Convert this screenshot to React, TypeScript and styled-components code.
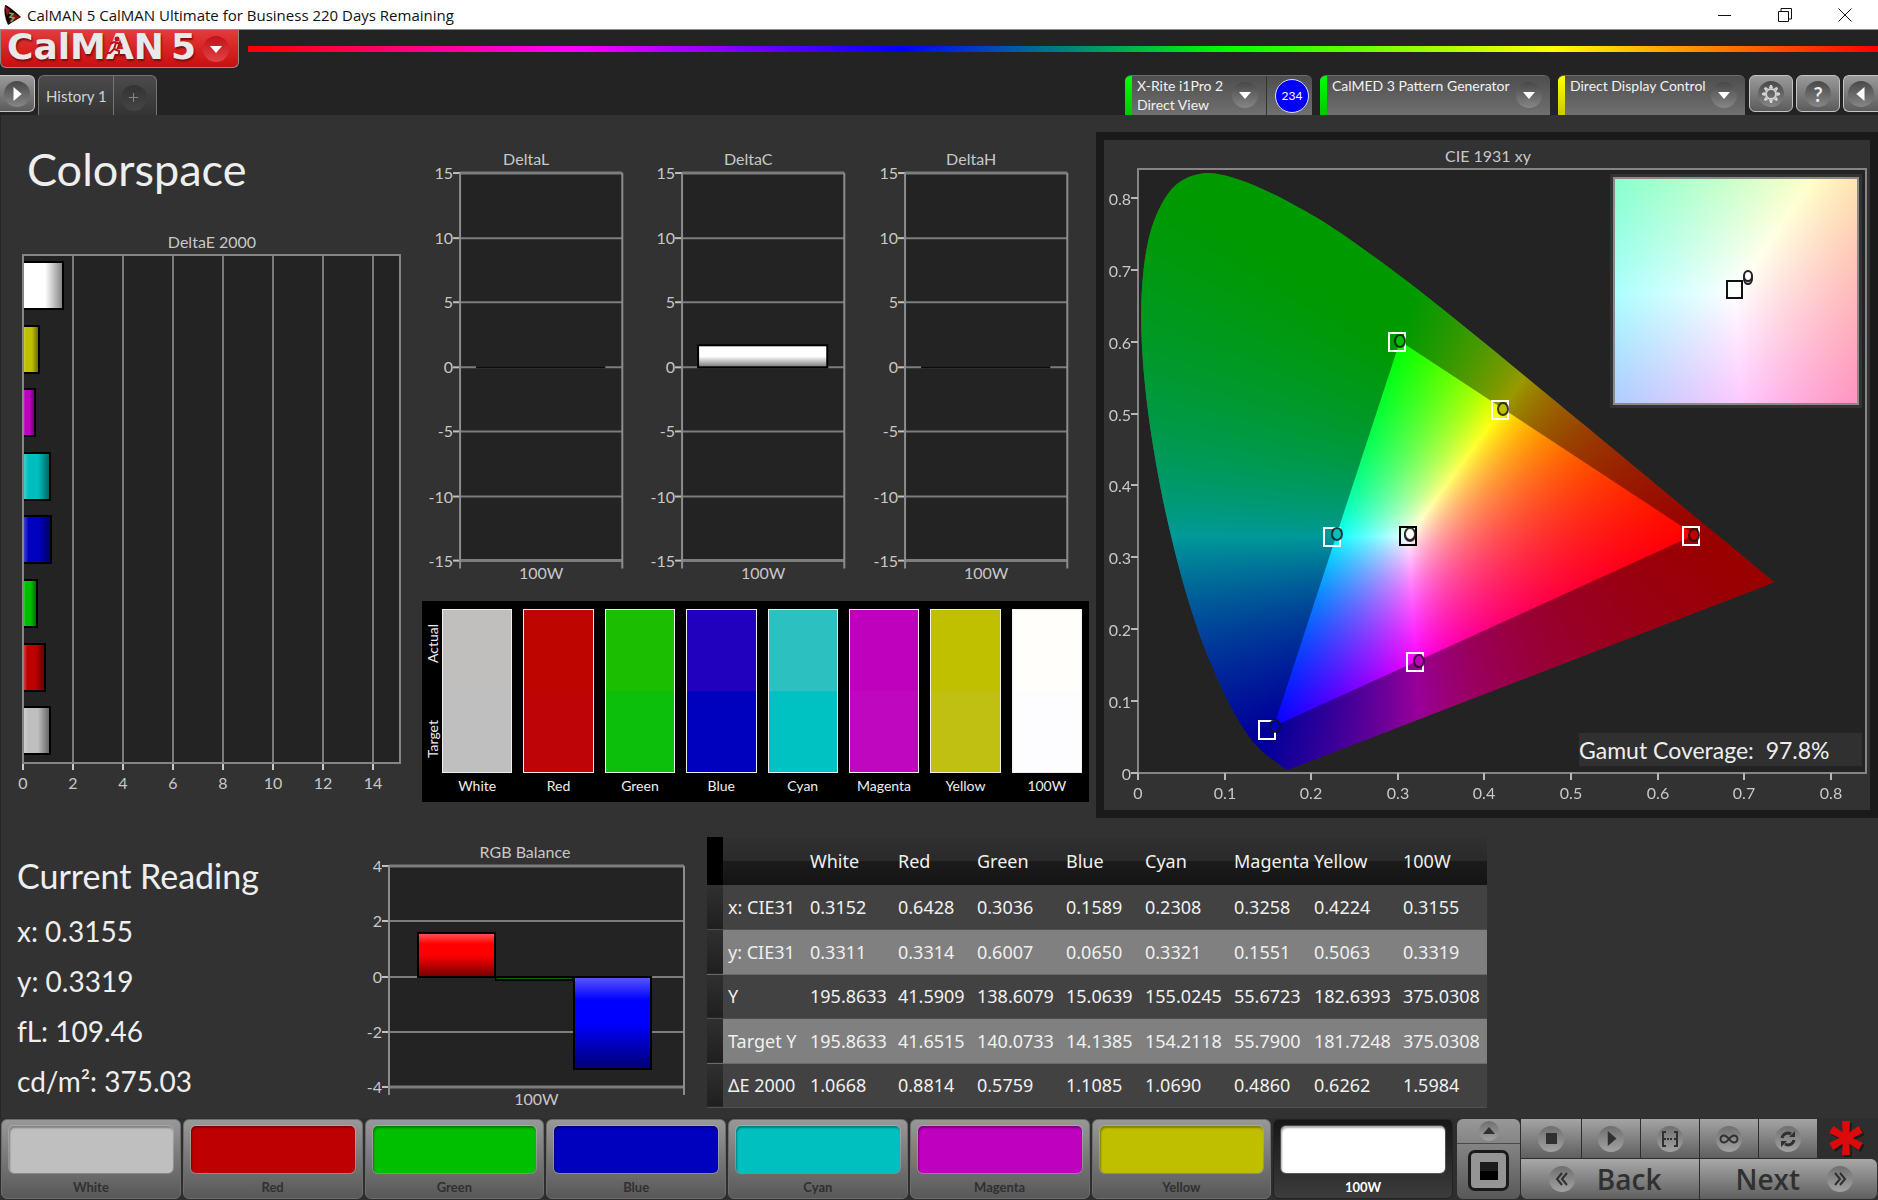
import React, { useEffect, useRef } from "react";
import styled, { createGlobalStyle, css } from "styled-components";

/* ---------- data ---------- */

const READINGS = [
  { name: "White", color: "#bfbfbf", actual: "#c0bfbd", target: "#bfbfbf", x: "0.3152", y: "0.3311", Y: "195.8633", targetY: "195.8633", dE: "1.0668" },
  { name: "Red", color: "#bf0000", actual: "#be0500", target: "#bf0408", x: "0.6428", y: "0.3314", Y: "41.5909", targetY: "41.6515", dE: "0.8814" },
  { name: "Green", color: "#00bf00", actual: "#1bbe00", target: "#0bbf0b", x: "0.3036", y: "0.6007", Y: "138.6079", targetY: "140.0733", dE: "0.5759" },
  { name: "Blue", color: "#0000bf", actual: "#2100be", target: "#0000bf", x: "0.1589", y: "0.0650", Y: "15.0639", targetY: "14.1385", dE: "1.1085" },
  { name: "Cyan", color: "#00bfbf", actual: "#2cc1c0", target: "#00c2c2", x: "0.2308", y: "0.3321", Y: "155.0245", targetY: "154.2118", dE: "1.0690" },
  { name: "Magenta", color: "#bf00bf", actual: "#bf00bc", target: "#bf07bf", x: "0.3258", y: "0.1551", Y: "55.6723", targetY: "55.7900", dE: "0.4860" },
  { name: "Yellow", color: "#bfbf00", actual: "#c0bf00", target: "#c0c012", x: "0.4224", y: "0.5063", Y: "182.6393", targetY: "181.7248", dE: "0.6262" },
  { name: "100W", color: "#ffffff", actual: "#fffefa", target: "#fdfdff", x: "0.3155", y: "0.3319", Y: "375.0308", targetY: "375.0308", dE: "1.5984" },
];

type RowKey = "x" | "y" | "Y" | "targetY" | "dE";
const TABLE_ROWS: { label: string; key: RowKey }[] = [
  { label: "x: CIE31", key: "x" },
  { label: "y: CIE31", key: "y" },
  { label: "Y", key: "Y" },
  { label: "Target Y", key: "targetY" },
  { label: "ΔE 2000", key: "dE" },
];

const LOCUS: [number, number][] = [
  [0.1741, 0.005], [0.1714, 0.0051], [0.1689, 0.0069], [0.1644, 0.0109], [0.1566, 0.0177],
  [0.144, 0.0297], [0.1355, 0.0399], [0.1241, 0.0578], [0.1096, 0.0868], [0.0913, 0.1327],
  [0.0687, 0.2007], [0.0454, 0.295], [0.0235, 0.4127], [0.0082, 0.5384], [0.0039, 0.6548],
  [0.0139, 0.7502], [0.0389, 0.812], [0.0743, 0.8338], [0.1142, 0.8262], [0.1547, 0.8059],
  [0.1929, 0.7816], [0.2296, 0.7543], [0.3016, 0.6923], [0.3731, 0.6245], [0.4441, 0.5547],
  [0.5125, 0.4866], [0.5752, 0.4242], [0.627, 0.3725], [0.6658, 0.334], [0.6915, 0.3083],
  [0.719, 0.2809], [0.7347, 0.2653],
];

/* ---------- base ---------- */

const sans = `Lato, "Liberation Sans", sans-serif`;
const uiSans = `"Open Sans", "Noto Sans", sans-serif`;

const GlobalStyle = createGlobalStyle`
  *, *::before, *::after { box-sizing: border-box; }
  body { margin: 0; background: #232323; }
  button { font: inherit; color: inherit; border: 0; margin: 0; padding: 0; background: none; cursor: pointer; }
  h1, h2, p { margin: 0; font-weight: 400; }
`;

const Window = styled.div`
  min-height: 100vh;
  display: flex;
  flex-direction: column;
  background: #232323;
  color: #eee;
  font-family: ${sans};
  overflow: hidden;
`;

/* ---------- title bar ---------- */

const TitleBar = styled.header`
  height: 30px;
  flex: none;
  display: flex;
  align-items: center;
  padding: 0 3px;
  background: #fff;
  border-bottom: 1px solid #8b9392;
  color: #111;
  font-family: ${uiSans};
  font-size: 15px;
`;
const TitleText = styled.span`
  flex: 1;
  padding-left: 5px;
  white-space: nowrap;
`;
const CaptionButton = styled.button`
  width: 60px;
  height: 29px;
  display: grid;
  place-items: center;
`;

/* ---------- brand row ---------- */

const BrandRow = styled.div`
  display: flex;
  height: 38px;
  flex: none;
`;
const Brand = styled.button`
  width: 239px;
  height: 38px;
  display: flex;
  align-items: center;
  padding: 0 9px 4px 6px;
  border: solid #8a8a8a;
  border-width: 0 1px 1px 1px;
  border-radius: 0 0 6px 6px;
  background: linear-gradient(#e23c3c, #d92323 50%, #c80f0f);
  position: relative;
`;
const BrandText = styled.span`
  flex: 1;
  display: flex;
  gap: 7px;
  font: bold 36px/36px "DejaVu Sans", sans-serif;
  color: #e9e9e9;
  text-align: left;
  text-shadow: 1px 2px 2px #7a0c0c;
`;
const Runner = styled.svg`
  position: absolute;
  left: 105px;
  top: 6px;
`;
const BrandArrow = styled.span`
  width: 26px;
  height: 26px;
  margin-top: 4px;
  border-radius: 50%;
  display: grid;
  place-items: center;
  background: linear-gradient(#c4101c, #e04444);
`;
const Rainbow = styled.div`
  flex: 1;
  height: 6px;
  margin: 16px 0 0 9px;
  background: linear-gradient(90deg, #f00, #f0f, #00f, #0f0, #ff0, #f00);
`;

/* ---------- tab row ---------- */

const TabRow = styled.nav`
  display: flex;
  align-items: flex-start;
  flex: none;
  height: 47px;
  padding-top: 7px;
  overflow: hidden;
`;
const ToolButton = styled.button<{ $edge?: "left" | "right" }>`
  width: 44px;
  height: 37px;
  margin-right: 3px;
  display: grid;
  place-items: center;
  border: 1px solid #c4c4c4;
  border-radius: 6px;
  background: linear-gradient(#9a9a9a, #5c5c5c);
  ${(p) => p.$edge === "left" && css`width: 35px; border-left: 0; border-radius: 0 6px 6px 0;`}
  ${(p) => p.$edge === "right" && css`width: 35px; margin-right: 0; border-right: 0; border-radius: 6px 0 0 6px;`}
`;
const Knob = styled.span<{ $size?: number; $tone?: "dark" | "tab" | "light" }>`
  width: ${(p) => p.$size ?? 26}px;
  height: ${(p) => p.$size ?? 26}px;
  flex: none;
  border-radius: 50%;
  display: grid;
  place-items: center;
  background: ${(p) =>
    p.$tone === "light" ? "linear-gradient(#6f6f6f, #a2a2a2)"
    : p.$tone === "tab" ? "linear-gradient(#333, #454545)"
    : "linear-gradient(#484848, #868686)"};
`;
const HelpMark = styled.b`
  font-size: 20px;
  line-height: 24px;
`;
const HistoryTabs = styled.div`
  display: flex;
  height: 40px;
  border: 1px solid #747474;
  border-bottom: 0;
  border-radius: 6px 6px 0 0;
  background: linear-gradient(#4b4b4b, #343434);
`;
const HistoryTab = styled.button`
  padding: 0 6px 0 7px;
  color: #d2d2d2;
  font-size: 15px;
  border-right: 1px solid #747474;
`;
const AddTab = styled.button`
  width: 42px;
  padding: 4px 0 0 7px;
`;
const TabSpacer = styled.div`
  flex: 1;
`;
const DeviceTab = styled.div<{ $led: string; $width: number }>`
  width: ${(p) => p.$width}px;
  height: 40px;
  margin-right: 8px;
  display: flex;
  border-radius: 6px 6px 0 0;
  overflow: hidden;
  background: linear-gradient(#4e4e4e, #707070);
  border-top: 1px solid #6c6c6c;
  &:has(+ ${ToolButton}) { margin-right: 4px; }
  &::before {
    content: "";
    flex: none;
    width: 7px;
    background: ${(p) => p.$led};
  }
`;
const DeviceButton = styled.button`
  flex: 1;
  display: flex;
  justify-content: space-between;
  align-items: flex-start;
  padding: 0 8px 0 5px;
  font-size: 14px;
  line-height: 19px;
  text-align: left;
  color: #f2f2f2;
  white-space: nowrap;
  & ${Knob} {
    margin-top: 6px;
  }
`;
const BadgeCell = styled.div`
  width: 46px;
  display: grid;
  place-items: center;
  border-left: 1px solid #333;
  padding-left: 5px;
`;
const Badge = styled.span`
  width: 34px;
  height: 34px;
  border-radius: 50%;
  border: 1px solid #ddf;
  background: #00f;
  color: #fff;
  display: grid;
  place-items: center;
  font-size: 12px;
`;

/* ---------- workspace ---------- */

const Workspace = styled.main`
  flex: 1;
  background: #323232;
  border-left: 1px solid #262626;
`;
const Upper = styled.div`
  display: grid;
  grid-template-columns: minmax(0, 421fr) minmax(0, 667fr) minmax(0, 789fr);
`;
const Column = styled.section<{ $top?: number }>`
  padding-top: ${(p) => p.$top ?? 0}px;
`;
const PageTitle = styled.h1`
  height: 115px;
  padding: 22px 0 0 26px;
  font-size: 45px;
  line-height: 64px;
`;
const Chart = styled.svg`
  display: block;
  width: 100%;
  height: auto;
  font-family: ${sans};
  font-size: 16px;
  fill: #c8c8c8;
`;
const DeltaCharts = styled.div`
  display: grid;
  grid-template-columns: repeat(3, minmax(0, 1fr));
`;
const ComparePanel = styled.div`
  margin-top: 10px;
  height: 201px;
  display: flex;
  gap: 11px;
  padding: 8px 7px 0 3px;
  background: #000;
`;
const CompareSides = styled.div`
  width: 17px;
  height: 164px;
  padding: 15px 0;
  margin-right: -11px;
  display: flex;
  flex-direction: column-reverse;
  justify-content: space-between;
  align-items: flex-start;
  font-size: 14px;
  line-height: 16px;
`;
const Side = styled.span`
  writing-mode: vertical-rl;
  rotate: 180deg;
`;
const CompareItem = styled.div`
  flex: 1;
  text-align: center;
  font-size: 14px;
  line-height: 26px;
`;
const ComparePatch = styled.div<{ $actual: string; $target: string }>`
  height: 164px;
  border: 1px solid #eee;
  background: linear-gradient(${(p) => p.$actual} 50%, ${(p) => p.$target} 50%);
`;
const CiePanel = styled.section`
  margin: 17px 0 0 7px;
  border: 8px solid #1a1a1a;
  align-self: start;
`;

const Lower = styled.div`
  display: flex;
  padding-top: 2px;
`;
const Reading = styled.section`
  width: 361px;
  padding: 34px 0 0 16px;
`;
const ReadingTitle = styled.h2`
  font-size: 34px;
  line-height: 44px;
  margin-bottom: 8px;
`;
const ReadingLine = styled.p`
  font-size: 28px;
  line-height: 50px;
`;
const BalanceChart = styled.section`
  width: 330px;
  padding-top: 20px;
`;
const DataTable = styled.table`
  align-self: flex-start;
  margin: 17px 0 0 15px;
  border-collapse: collapse;
  table-layout: fixed;
  width: 780px;
  font-family: "Noto Sans", "Open Sans", sans-serif;
  font-size: 18px;
  color: #f0f0f0;
  th, td { padding: 0 0 0 5px; text-align: left; font-weight: 400; white-space: nowrap; }
  thead tr { height: 48px; background: linear-gradient(#303030, #2a2a2a 50%, #1b1b1b 50%, #141414); }
  tbody tr { height: 44px; background: #424242; border-bottom: 1px solid #505050; }
  tbody tr:nth-child(even) { height: 45px; background: #808080; border-bottom-color: #6a6a6a; }
  thead td:first-child { background: #000; }
  tbody td:first-child { background: linear-gradient(#303030, #1f1f1f); }
`;
const Col = styled.col<{ $w: number }>`
  width: ${(p) => p.$w}px;
`;

/* ---------- footer ---------- */

const Footer = styled.footer`
  display: flex;
  flex: none;
  height: 82px;
  padding: 1px 1px 1px 1px;
  background: #2e2e2e;
`;
const PatternButton = styled.button<{ $active?: boolean }>`
  flex: 1;
  margin-right: 2px;
  padding: 6px 7px 0;
  display: flex;
  flex-direction: column;
  justify-content: flex-start;
  border-radius: 6px;
  font-size: 13px;
  font-weight: 700;
  text-align: center;
  color: #303030;
  background: linear-gradient(#989898, #7e7e7e 40%, #585858);
  border: 1px solid #6d6d6d;
  ${(p) => p.$active && css`color: #fff; background: linear-gradient(#161616, #3c3c3c); border-color: #222;`}
`;
const Patch = styled.span<{ $color: string }>`
  height: 47px;
  border-radius: 5px;
  background: ${(p) => p.$color};
  box-shadow: inset 1px 2px 2px #0005, 0 0 0 1px #fff3;
`;
const PatternName = styled.span`
  padding-top: 5px;
  line-height: 18px;
`;
const WindowSize = styled.div`
  width: 63px;
  margin-left: 2px;
  display: flex;
  flex-direction: column;
  border-radius: 6px;
  overflow: hidden;
  background: linear-gradient(#989898, #7e7e7e 40%, #585858);
`;
const SizeUp = styled.button`
  height: 25px;
  display: grid;
  place-items: center;
  border-bottom: 1px solid #4a4a4a;
`;
const SizeFull = styled.button`
  width: 41px;
  height: 41px;
  margin: 6px auto 0;
  display: grid;
  place-items: center;
  border: 3px solid #1a1a1a;
  border-radius: 7px;
  background: #959595;
`;
const BlackSquare = styled.span`
  width: 18px;
  height: 18px;
  background: linear-gradient(#1c1c1c 50%, #000 50%);
`;
const Deck = styled.div`
  width: 356px;
  margin-left: 1px;
`;
const DeckTop = styled.div`
  display: flex;
  height: 40px;
`;
const DeckButton = styled.button`
  width: 58px;
  height: 39px;
  margin-right: 1px;
  display: grid;
  place-items: center;
  background: linear-gradient(#a4a4a4, #5f5f5f);
  &:first-child { width: 60px; }
`;
const Star = styled.div`
  flex: 1;
  display: grid;
  place-items: center;
  padding: 0 4px 4px 0;
`;
const DeckBottom = styled.div`
  display: grid;
  grid-template-columns: 1fr 1fr;
  gap: 1px;
  height: 40px;
  border-radius: 0 6px 6px 6px;
  overflow: hidden;
`;
const NavButton = styled.button`
  display: flex;
  align-items: center;
  justify-content: space-between;
  padding: 0 37px 0 28px;
  font: 600 28px/38px ${uiSans};
  color: #303030;
  background: linear-gradient(#a8a8a8, #5f5f5f);
  &:last-child { padding: 0 24px 0 36px; }
`;

/* ---------- small glyphs ---------- */

const Triangle = ({ dir, size = 12, fill = "#fff" }: { dir: "up" | "down" | "left" | "right"; size?: number; fill?: string }) => {
  const d = {
    down: "M0 3h12l-6 7z",
    up: "M0 9h12l-6-7z",
    right: "M3 0v12l7-6z",
    left: "M9 0v12l-7-6z",
  }[dir];
  return (
    <svg width={size} height={size} viewBox="0 0 12 12" aria-hidden="true">
      <path d={d} fill={fill} />
    </svg>
  );
};

const Gear = () => (
  <svg width="20" height="20" viewBox="-10 -10 20 20" aria-hidden="true">
    {Array.from({ length: 8 }, (_, i) => (
      <path key={i} d="M-2 -6 L-1 -9 H1 L2 -6 Z" fill="#d4d4d4" transform={`rotate(${i * 45})`} />
    ))}
    <circle r="5" fill="none" stroke="#d4d4d4" strokeWidth="2" />
  </svg>
);

const AppIcon = () => (
  <svg width="19" height="22" viewBox="0 0 19 22" aria-hidden="true">
    <path d="M2 1 Q5 1 18 13 L5 21 Q0 10 2 1Z" fill="#1a0505" />
    <path d="M2 2 L7 6 L4 12 Z" fill="#a01818" />
    <path d="M10 9 L17 13 L6 19 Z" fill="#8c1010" />
    <path d="M6 9l4 1-3 3 4 1-3 4" fill="none" stroke="#6fae5e" strokeWidth="1.5" />
  </svg>
);

/* ---------- charts ---------- */

type Bar = { from: number; to: number; value: number; fill: string };
type BarChartProps = {
  id: string; title: string; width: number; height: number;
  left: number; right: number; top: number; bottom: number;
  titleX: number; max: number; step: number; bars: Bar[];
};

function LevelChart({ id, title, width, height, left, right, top, bottom, titleX, max, step, bars }: BarChartProps) {
  const yOf = (v: number) => Math.round(top + ((max - v) / (2 * max)) * (bottom - top));
  const levels: number[] = [];
  for (let v = max; v >= -max; v -= step) levels.push(v);
  const zero = yOf(0);
  return (
    <Chart viewBox={`0 0 ${width} ${height}`} role="img" aria-label={title}>
      <defs>
        <linearGradient id={id} x1="0" y1="0" x2="0" y2="1">
          <stop offset="0" stopColor="#fff" stopOpacity=".35" />
          <stop offset=".25" stopColor="#fff" stopOpacity="0" />
          <stop offset=".5" stopColor="#000" stopOpacity="0" />
          <stop offset="1" stopColor="#000" stopOpacity=".55" />
        </linearGradient>
      </defs>
      <text x={titleX} y={top - 8} textAnchor="middle">{title}</text>
      <rect x={left} y={top} width={right - left} height={bottom - top} fill="#232323" />
      {levels.map((v) => (
        <g key={v}>
          <path d={`M${left} ${yOf(v)}H${right}`} stroke="#7d7d7d" strokeWidth={Math.abs(v) === max ? 3 : 2} />
          <path d={`M${left - 7} ${yOf(v)}H${left}`} stroke="#c0c0c0" strokeWidth="2" />
          <text x={left - 7} y={yOf(v) + 6} textAnchor="end">{v}</text>
        </g>
      ))}
      <path d={`M${left} ${bottom + 8}V${top}M${right} ${top}V${bottom + 8}`} stroke="#8c8c8c" strokeWidth="2" />
      {bars.map((b) => {
        const y = Math.min(yOf(b.value), zero);
        const h = Math.abs(yOf(b.value) - zero);
        if (h === 0) return <path key={b.from} d={`M${b.from} ${zero}H${b.to}`} stroke="#0b0b0b" strokeWidth="2" />;
        return (
          <g key={b.from}>
            <rect x={b.from} y={y} width={b.to - b.from} height={h} fill={b.fill} />
            <rect x={b.from} y={y} width={b.to - b.from} height={h} fill={`url(#${id})`} stroke="#000" strokeWidth="2" />
          </g>
        );
      })}
      <text x={(left + right) / 2} y={bottom + 18} textAnchor="middle">100W</text>
    </Chart>
  );
}

function DeltaEChart() {
  const left = 22, right = 399, top = 25, bottom = 533, unit = 25;
  return (
    <Chart viewBox="0 0 421 570" role="img" aria-label="DeltaE 2000">
      <defs>
        <linearGradient id="cylinder">
          <stop offset="0" stopColor="#fff" stopOpacity=".3" />
          <stop offset=".2" stopColor="#fff" stopOpacity="0" />
          <stop offset=".55" stopColor="#000" stopOpacity="0" />
          <stop offset="1" stopColor="#000" stopOpacity=".5" />
        </linearGradient>
      </defs>
      <text x="211" y="18" textAnchor="middle">DeltaE 2000</text>
      <rect x={left} y={top} width={right - left} height={bottom - top} fill="#232323" />
      {[0, 2, 4, 6, 8, 10, 12, 14].map((v) => (
        <g key={v}>
          <path d={`M${left + v * unit} ${top}V${bottom}`} stroke="#7a7a7a" strokeWidth="2" />
          <path d={`M${left + v * unit} ${bottom}v7`} stroke="#c8c8c8" strokeWidth="2" />
          <text x={left + v * unit} y="559" textAnchor="middle">{v}</text>
        </g>
      ))}
      {[...READINGS].reverse().map((r, i) => {
        const y = Math.round(32 + i * 63.6);
        const w = Math.round(Number(r.dE) * unit);
        return (
          <g key={r.name}>
            <rect x={left} y={y} width={w} height="47" fill={r.color} />
            <rect x={left} y={y} width={w} height="47" fill="url(#cylinder)" stroke="#000" strokeWidth="2" />
          </g>
        );
      })}
      <rect x={left} y={top} width={right - left} height={bottom - top} fill="none" stroke="#858585" strokeWidth="2" />
    </Chart>
  );
}

/* Linear sRGB for a chromaticity, scaled so that its largest channel is full. */
function chromaticityColor(x: number, y: number): [number, number, number] {
  const X = x / y, Z = (1 - x - y) / y;
  const r = Math.max(0, 3.2406 * X - 1.5372 - 0.4986 * Z);
  const g = Math.max(0, -0.9689 * X + 1.8758 + 0.0415 * Z);
  const b = Math.max(0, 0.0557 * X - 0.204 + 1.057 * Z);
  const m = Math.max(r, g, b) / 255;
  return [r / m, g / m, b / m];
}

type Range = { x0: number; x1: number; y0: number; y1: number };

const Canvas = styled.canvas`
  display: block;
`;

function ChromaCanvas({ width, height, range, gamut }: { width: number; height: number; range: Range; gamut?: [number, number][] }) {
  const ref = useRef<HTMLCanvasElement>(null);
  useEffect(() => {
    const canvas = ref.current!;
    const ctx = canvas.getContext("2d")!;
    const px = (x: number) => ((x - range.x0) / (range.x1 - range.x0)) * width;
    const py = (y: number) => ((range.y1 - y) / (range.y1 - range.y0)) * height;
    const field = document.createElement("canvas");
    field.width = width;
    field.height = height;
    const fctx = field.getContext("2d")!;
    const img = fctx.createImageData(width, height);
    for (let j = 0; j < height; j++) {
      const y = range.y1 - ((j + 0.5) / height) * (range.y1 - range.y0);
      for (let i = 0; i < width; i++) {
        const x = range.x0 + ((i + 0.5) / width) * (range.x1 - range.x0);
        const [r, g, b] = chromaticityColor(x, y);
        const k = (j * width + i) * 4;
        img.data[k] = r;
        img.data[k + 1] = g;
        img.data[k + 2] = b;
        img.data[k + 3] = 255;
      }
    }
    fctx.putImageData(img, 0, 0);
    ctx.clearRect(0, 0, width, height);
    if (!gamut) {
      ctx.drawImage(field, 0, 0);
      return;
    }
    const p = LOCUS.map(([x, y]) => [px(x), py(y)]);
    ctx.save();
    ctx.beginPath();
    ctx.moveTo(p[0][0], p[0][1]);
    for (let i = 0; i < p.length - 1; i++) {
      const a = p[Math.max(0, i - 1)], b = p[i], c = p[i + 1], d = p[Math.min(p.length - 1, i + 2)];
      ctx.bezierCurveTo(b[0] + (c[0] - a[0]) / 6, b[1] + (c[1] - a[1]) / 6, c[0] - (d[0] - b[0]) / 6, c[1] - (d[1] - b[1]) / 6, c[0], c[1]);
    }
    ctx.closePath();
    ctx.clip();
    ctx.drawImage(field, 0, 0);
    ctx.fillStyle = "rgba(0,0,0,0.4)";
    ctx.fillRect(0, 0, width, height);
    ctx.restore();
    ctx.save();
    ctx.beginPath();
    gamut.forEach(([x, y], i) => (i ? ctx.lineTo(px(x), py(y)) : ctx.moveTo(px(x), py(y))));
    ctx.closePath();
    ctx.clip();
    ctx.drawImage(field, 0, 0);
    ctx.restore();
  }, [width, height, range, gamut]);
  return <Canvas ref={ref} width={width} height={height} />;
}

const MAIN_RANGE: Range = { x0: 0, x1: 0.8406, y0: 0, y1: 0.84 };
const INSET_RANGE: Range = { x0: 0.2885, x1: 0.3371, y0: 0.304, y1: 0.3546 };
const GAMUT: [number, number][] = [[0.3025, 0.6007], [0.6428, 0.3314], [0.157, 0.065]];
const TARGETS = [[0.64, 0.33], [0.3, 0.6], [0.15, 0.06], [0.2247, 0.3287], [0.3209, 0.1542], [0.4193, 0.5053]];

function CieChart() {
  const ox = 34, oy = 633, ux = 866, uy = 719;
  const X = (x: number) => Math.round(ox + x * ux);
  const Y = (y: number) => Math.round(oy - y * uy);
  return (
    <Chart viewBox="0 0 766 670" role="img" aria-label="CIE 1931 xy chromaticity">
      <text x="384" y="22" textAnchor="middle">CIE 1931 xy</text>
      <rect x={ox} y="29" width="728" height="604" fill="#232323" />
      <foreignObject x={ox} y="29" width="728" height="604">
        <ChromaCanvas width={728} height={604} range={MAIN_RANGE} gamut={GAMUT} />
      </foreignObject>
      <rect x={ox} y="29" width="728" height="604" fill="none" stroke="#858585" strokeWidth="2" />
      {[0, 1, 2, 3, 4, 5, 6, 7, 8].map((n) => (
        <g key={n}>
          <path d={`M${X(n / 10)} ${oy}v7M${ox - 7} ${Y(n / 10)}h7`} stroke="#b8b8b8" strokeWidth="2" />
          <text x={X(n / 10)} y="659" textAnchor="middle">{n / 10}</text>
          <text x={ox - 7} y={Y(n / 10) + 7} textAnchor="end">{n / 10}</text>
        </g>
      ))}
      {TARGETS.map(([x, y]) => (
        <rect key={x} x={X(x) - 9} y={Y(y) - 9} width="16" height="18" fill="none" stroke="#fff" strokeWidth="2" />
      ))}
      <rect x={X(0.3127) - 9} y={Y(0.329) - 9} width="16" height="18" fill="none" stroke="#000" strokeWidth="2" />
      {READINGS.map((r) => (
        <ellipse key={r.name} cx={X(Number(r.x)) - 1} cy={Y(Number(r.y))} rx="5" ry="6" fill={r.color} stroke="#111" strokeOpacity=".8" strokeWidth="2" />
      ))}

      <rect x="506" y="34" width="252" height="234" fill="#333" />
      <foreignObject x="510" y="38" width="244" height="226">
        <ChromaCanvas width={244} height={226} range={INSET_RANGE} />
      </foreignObject>
      <rect x="510" y="38" width="244" height="226" fill="none" stroke="#8a8a8a" strokeWidth="2" />
      <rect x="623" y="141" width="15" height="17" fill="none" stroke="#111" strokeWidth="2" />
      <ellipse cx="644" cy="139" rx="4" ry="5" fill="#bfbfbf" stroke="#222" strokeWidth="2" />
      <ellipse cx="644" cy="136" rx="4" ry="5" fill="#fff" stroke="#222" strokeWidth="2" />

      <rect x="475" y="593" width="283" height="33" fill="#303030" />
      <text x="475" y="619" fontSize="23" fill="#eee" xmlSpace="preserve">Gamut Coverage:  97.8%</text>
    </Chart>
  );
}

/* ---------- page ---------- */

const G = "#303030";

export default function App() {
  return (
    <Window>
      <GlobalStyle />
      <TitleBar>
        <AppIcon />
        <TitleText>CalMAN 5 CalMAN Ultimate for Business 220 Days Remaining</TitleText>
        <CaptionButton aria-label="Minimize">
          <svg width="14" height="14" viewBox="0 0 14 14"><path d="M0 7.5h13" stroke="#111" /></svg>
        </CaptionButton>
        <CaptionButton aria-label="Restore">
          <svg width="14" height="14" viewBox="0 0 14 14" fill="none" stroke="#111">
            <path d="M.5 3.5h10v10h-10zM3 3V.5h10.500v10.500H11" />
          </svg>
        </CaptionButton>
        <CaptionButton aria-label="Close">
          <svg width="14" height="14" viewBox="0 0 14 14"><path d="M.5.5l13 13M13.500.5l-13 13" stroke="#111" /></svg>
        </CaptionButton>
      </TitleBar>

      <BrandRow>
        <Brand aria-label="CalMAN 5 menu">
          <BrandText><span>CalMAN</span><span>5</span></BrandText>
          <Runner width="20" height="22" viewBox="0 0 20 22" fill="none" stroke="#b81414" strokeWidth="2" aria-hidden="true">
            <circle cx="11" cy="3" r="1.500" fill="#b81414" />
            <path d="M4 8l4-2 4 1 4 2M10 7l-2 6 5 2v5M8 13l-4 4H1" />
          </Runner>
          <BrandArrow><Triangle dir="down" /></BrandArrow>
        </Brand>
        <Rainbow />
      </BrandRow>

      <TabRow>
        <ToolButton $edge="left" aria-label="Show workflow">
          <Knob><Triangle dir="right" size={14} /></Knob>
        </ToolButton>
        <HistoryTabs>
          <HistoryTab>History 1</HistoryTab>
          <AddTab aria-label="Add history">
            <Knob $tone="tab">
              <svg width="9" height="9" viewBox="0 0 9 9"><path d="M4.500 0v9M0 4.500h9" stroke="#868686" /></svg>
            </Knob>
          </AddTab>
        </HistoryTabs>
        <TabSpacer />
        <DeviceTab $led="linear-gradient(#0f0, #00c800)" $width={187}>
          <DeviceButton>
            <span>X-Rite i1Pro 2<br />Direct View</span>
            <Knob><Triangle dir="down" /></Knob>
          </DeviceButton>
          <BadgeCell><Badge>234</Badge></BadgeCell>
        </DeviceTab>
        <DeviceTab $led="linear-gradient(#0f0, #00c800)" $width={230}>
          <DeviceButton>
            <span>CalMED 3 Pattern Generator</span>
            <Knob><Triangle dir="down" /></Knob>
          </DeviceButton>
        </DeviceTab>
        <DeviceTab $led="linear-gradient(#ff0, #d0c800)" $width={187}>
          <DeviceButton>
            <span>Direct Display Control</span>
            <Knob><Triangle dir="down" /></Knob>
          </DeviceButton>
        </DeviceTab>
        <ToolButton aria-label="Settings"><Knob><Gear /></Knob></ToolButton>
        <ToolButton aria-label="Help">
          <Knob><HelpMark>?</HelpMark></Knob>
        </ToolButton>
        <ToolButton $edge="right" aria-label="Show panel">
          <Knob><Triangle dir="left" size={14} /></Knob>
        </ToolButton>
      </TabRow>

      <Workspace>
        <Upper>
          <Column>
            <PageTitle>Colorspace</PageTitle>
            <DeltaEChart />
          </Column>
          <Column $top={30}>
            <DeltaCharts>
              {[["DeltaL", 0], ["DeltaC", 1.7], ["DeltaH", 0]].map(([title, value]) => (
                <LevelChart
                  key={title}
                  id={`shade-${title}`}
                  title={String(title)}
                  width={222} height={445}
                  left={38} right={200} top={28} bottom={415}
                  titleX={104} max={15} step={5}
                  bars={[{ from: 54, to: 183, value: Number(value), fill: "#fff" }]}
                />
              ))}
            </DeltaCharts>
            <ComparePanel>
              <CompareSides><Side>Target</Side><Side>Actual</Side></CompareSides>
              {READINGS.map((r) => (
                <CompareItem key={r.name}>
                  <ComparePatch $actual={r.actual} $target={r.target} />
                  {r.name}
                </CompareItem>
              ))}
            </ComparePanel>
          </Column>
          <CiePanel><CieChart /></CiePanel>
        </Upper>

        <Lower>
          <Reading>
            <ReadingTitle>Current Reading</ReadingTitle>
            <ReadingLine>x: 0.3155</ReadingLine>
            <ReadingLine>y: 0.3319</ReadingLine>
            <ReadingLine>fL: 109.46</ReadingLine>
            <ReadingLine>cd/m²: 375.03</ReadingLine>
          </Reading>
          <BalanceChart>
            <LevelChart
              id="shade-rgb" title="RGB Balance"
              width={330} height={275}
              left={27} right={322} top={26} bottom={247}
              titleX={163} max={4} step={2}
              bars={[
                { from: 56, to: 133, value: 1.57, fill: "#f00" },
                { from: 134, to: 211, value: -0.12, fill: "#0a6a0a" },
                { from: 212, to: 289, value: -3.35, fill: "#00f" },
              ]}
            />
          </BalanceChart>
          <DataTable>
            <colgroup>
              {[16, 82, 88, 79, 89, 79, 89, 80, 89, 89].map((w, i) => <Col key={i} $w={w} />)}
            </colgroup>
            <thead>
              <tr>
                <td />
                <td />
                {READINGS.map((r) => <th key={r.name} scope="col">{r.name}</th>)}
              </tr>
            </thead>
            <tbody>
              {TABLE_ROWS.map((row) => (
                <tr key={row.key}>
                  <td />
                  <th scope="row">{row.label}</th>
                  {READINGS.map((r) => <td key={r.name}>{r[row.key]}</td>)}
                </tr>
              ))}
            </tbody>
          </DataTable>
        </Lower>
      </Workspace>

      <Footer>
        {READINGS.map((r) => (
          <PatternButton key={r.name} $active={r.name === "100W"}>
            <Patch $color={r.color} />
            <PatternName>{r.name}</PatternName>
          </PatternButton>
        ))}
        <WindowSize>
          <SizeUp aria-label="Pattern window options">
            <Knob $size={20} $tone="light"><Triangle dir="up" fill={G} /></Knob>
          </SizeUp>
          <SizeFull aria-label="Window size"><BlackSquare /></SizeFull>
        </WindowSize>
        <Deck>
          <DeckTop>
            <DeckButton aria-label="Stop">
              <Knob $tone="light"><svg width="11" height="11"><rect width="11" height="11" fill={G} /></svg></Knob>
            </DeckButton>
            <DeckButton aria-label="Read">
              <Knob $tone="light"><Triangle dir="right" size={15} fill={G} /></Knob>
            </DeckButton>
            <DeckButton aria-label="Read series">
              <Knob $tone="light">
                <svg width="18" height="16" viewBox="0 0 18 16" fill="none" stroke={G} strokeWidth="2">
                  <path d="M5 1H2v14h3M13 1h3v14h-3M2 8h3M13 8h3" />
                  <path d="M6 8h6" strokeDasharray="2 1" />
                </svg>
              </Knob>
            </DeckButton>
            <DeckButton aria-label="Read continuously">
              <Knob $tone="light">
                <svg width="20" height="10" viewBox="0 0 20 10" fill="none" stroke={G} strokeWidth="2">
                  <path d="M10 5C8 2.500 7 1.500 5 1.500a3.500 3.500 0 0 0 0 7C7 8.500 8 7.500 10 5s3-3.500 5-3.500a3.500 3.500 0 0 1 0 7C13 8.500 12 7.500 10 5z" />
                </svg>
              </Knob>
            </DeckButton>
            <DeckButton aria-label="Refresh">
              <Knob $tone="light">
                <svg width="16" height="16" viewBox="0 0 16 16" fill="none" stroke={G} strokeWidth="3">
                  <path d="M2 7a6 6 0 0 1 9-4M14 9a6 6 0 0 1-9 4" />
                  <path d="M9 6h6V0zM7 10H1v6z" fill={G} stroke="none" />
                </svg>
              </Knob>
            </DeckButton>
            <Star>
              <svg width="38" height="38" viewBox="-19 -19 38 38" role="img" aria-label="Modified">
                {["#111", "#dc0a0a"].map((c, k) => (
                  <g key={c} fill={c} transform={k ? "" : "translate(2 2)"} opacity={k ? 1 : 0.6}>
                    {[0, 60, 120].map((a) => (
                      <path key={a} d="M-4-17H4L3 0 4 17H-4L-3 0z" transform={`rotate(${a})`} />
                    ))}
                  </g>
                ))}
              </svg>
            </Star>
          </DeckTop>
          <DeckBottom>
            <NavButton>
              <Knob $tone="light">
                <svg width="14" height="14" viewBox="0 0 14 14" fill="none" stroke={G} strokeWidth="2"><path d="M7 1L2 7l5 6M12 1L7 7l5 6" /></svg>
              </Knob>
              Back
            </NavButton>
            <NavButton>
              Next
              <Knob $tone="light">
                <svg width="14" height="14" viewBox="0 0 14 14" fill="none" stroke={G} strokeWidth="2"><path d="M2 1l5 6-5 6M7 1l5 6-5 6" /></svg>
              </Knob>
            </NavButton>
          </DeckBottom>
        </Deck>
      </Footer>
    </Window>
  );
}
